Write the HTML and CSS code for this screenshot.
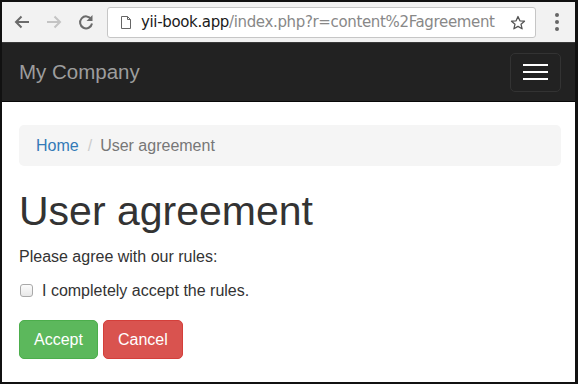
FILE: index.html
```html
<!DOCTYPE html>
<html lang="en">
<head>
    <meta charset="UTF-8">
    <title>User agreement</title>
    <link rel="stylesheet" href="styles.css">
</head>
<body>
    <div class="frame">

        <!-- Browser toolbar -->
        <div class="toolbar">
            <div class="nav-icons">
                <svg class="icon" width="18" height="18" viewBox="0 0 18 18">
                    <path d="M16 9H3M8.5 3.5L3 9l5.5 5.5" fill="none" stroke="#6b6b6b" stroke-width="2"/>
                </svg>
                <svg class="icon" width="18" height="18" viewBox="0 0 18 18">
                    <path d="M2 9h13M9.5 3.5L15 9l-5.5 5.5" fill="none" stroke="#c4c4c4" stroke-width="2"/>
                </svg>
                <svg class="icon" width="18" height="18" viewBox="0 0 18 18">
                    <path d="M14.2 6.2A6 6 0 1 0 15 10.5" fill="none" stroke="#6b6b6b" stroke-width="2"/>
                    <path d="M15.5 2v6h-6z" fill="#6b6b6b"/>
                </svg>
            </div>
            <div class="address">
                <svg class="page-icon" width="10" height="13" viewBox="0 0 10 13">
                    <path d="M0.5 0.5h6l3 3v9h-9z M6.5 0.5v3h3" fill="none" stroke="#666" stroke-width="1"/>
                </svg>
                <span class="host">yii-book.app</span><span class="path">/index.php?r=content%2Fagreement</span>
                <svg class="star" width="16" height="16" viewBox="0 0 16 16">
                    <path d="M8 1.5l1.9 4.3 4.6.4-3.5 3 1.1 4.6L8 11.4l-4.1 2.4 1.1-4.6-3.5-3 4.6-.4z" fill="none" stroke="#555" stroke-width="1.3" stroke-linejoin="round"/>
                </svg>
            </div>
            <div class="menu-dots">
                <span></span><span></span><span></span>
            </div>
        </div>

        <!-- Site navbar -->
        <div class="navbar">
            <a class="brand" href="#">My Company</a>
            <div class="toggle">
                <span class="bar"></span>
                <span class="bar"></span>
                <span class="bar"></span>
            </div>
        </div>

        <!-- Page content -->
        <div class="content">
            <ul class="breadcrumb">
                <li><a href="#">Home</a></li>
                <li class="active">User agreement</li>
            </ul>

            <h1>User agreement</h1>
            <p>Please agree with our rules:</p>

            <label class="checkbox">
                <input type="checkbox">
                I completely accept the rules.
            </label>

            <div class="buttons">
                <button class="btn btn-success">Accept</button>
                <button class="btn btn-danger">Cancel</button>
            </div>
        </div>

    </div>
</body>
</html>
```

FILE: styles.css
```css
body {
    margin: 0;
    font-family: "Liberation Sans", Arial, sans-serif;
    color: #333;
}

.frame {
    width: 578px;
    height: 384px;
    box-sizing: border-box;
    border: 2px solid #111;
    border-right-width: 3px;
    background: #fff;
    overflow: hidden;
}

/* Browser toolbar */
.toolbar {
    height: 41px;
    background: #f2f2f2;
    border-bottom: 1px solid #3a3a3a;
    display: flex;
    align-items: center;
    box-sizing: border-box;
}

.nav-icons {
    display: flex;
    align-items: center;
    gap: 14px;
    padding-left: 11px;
    width: 94px;
}

.address {
    width: 429px;
    height: 31px;
    box-sizing: border-box;
    background: #fff;
    border: 1px solid #c6c6c6;
    border-radius: 3px;
    display: flex;
    align-items: center;
    padding-left: 13px;
    font-family: "DejaVu Sans", sans-serif;
    font-size: 15px;
    letter-spacing: -0.35px;
    position: relative;
}

.page-icon {
    margin-right: 10px;
}

.host {
    color: #1a1a1a;
}

.path {
    color: #888;
}

.star {
    position: absolute;
    right: 9px;
    top: 7px;
}

.menu-dots {
    display: flex;
    flex-direction: column;
    gap: 3px;
    margin-left: 19px;
}

.menu-dots span {
    width: 4px;
    height: 4px;
    border-radius: 50%;
    background: #666;
}

/* Navbar */
.navbar {
    height: 59px;
    background: #222;
    border-bottom: 1px solid #080808;
    box-sizing: border-box;
    display: flex;
    align-items: center;
    justify-content: space-between;
    padding: 0 14px 0 17px;
}

.brand {
    color: #9d9d9d;
    font-size: 20.5px;
    text-decoration: none;
}

.toggle {
    width: 51px;
    height: 39px;
    box-sizing: border-box;
    border: 1px solid #333;
    border-radius: 5px;
    display: flex;
    flex-direction: column;
    align-items: center;
    justify-content: center;
    gap: 4.5px;
}

.toggle .bar {
    width: 25px;
    height: 2.5px;
    background: #fff;
}

/* Content */
.content {
    padding: 23px 14px 0 17px;
    font-size: 16px;
    line-height: 23px;
}

.breadcrumb {
    list-style: none;
    margin: 0 0 23px;
    padding: 9px 17px;
    background: #f5f5f5;
    border-radius: 5px;
    display: flex;
}

.breadcrumb a {
    color: #337ab7;
    text-decoration: none;
}

.breadcrumb li + li::before {
    content: "/";
    color: #ccc;
    padding: 0 8px 0 9px;
}

.breadcrumb .active {
    color: #777;
}

h1 {
    font-size: 41px;
    font-weight: 500;
    line-height: 45px;
    margin: 23px 0 11px;
}

p {
    margin: 0 0 11px;
}

.checkbox {
    display: flex;
    align-items: center;
    gap: 9px;
    margin: 0 0 11px 1px;
}

.checkbox input {
    appearance: none;
    width: 13px;
    height: 13px;
    margin: 0;
    border: 1px solid #a9a9a9;
    border-radius: 3px;
    background: linear-gradient(#fcfcfc, #e8e8e8);
}

.buttons {
    display: flex;
    gap: 5px;
    padding-top: 7px;
}

.btn {
    font-family: inherit;
    font-size: 16px;
    line-height: 23px;
    padding: 7px 14px;
    border: 1px solid transparent;
    border-radius: 5px;
    color: #fff;
}

.btn-success {
    background: #5cb85c;
    border-color: #4cae4c;
}

.btn-danger {
    background: #d9534f;
    border-color: #d43f3a;
}
```
